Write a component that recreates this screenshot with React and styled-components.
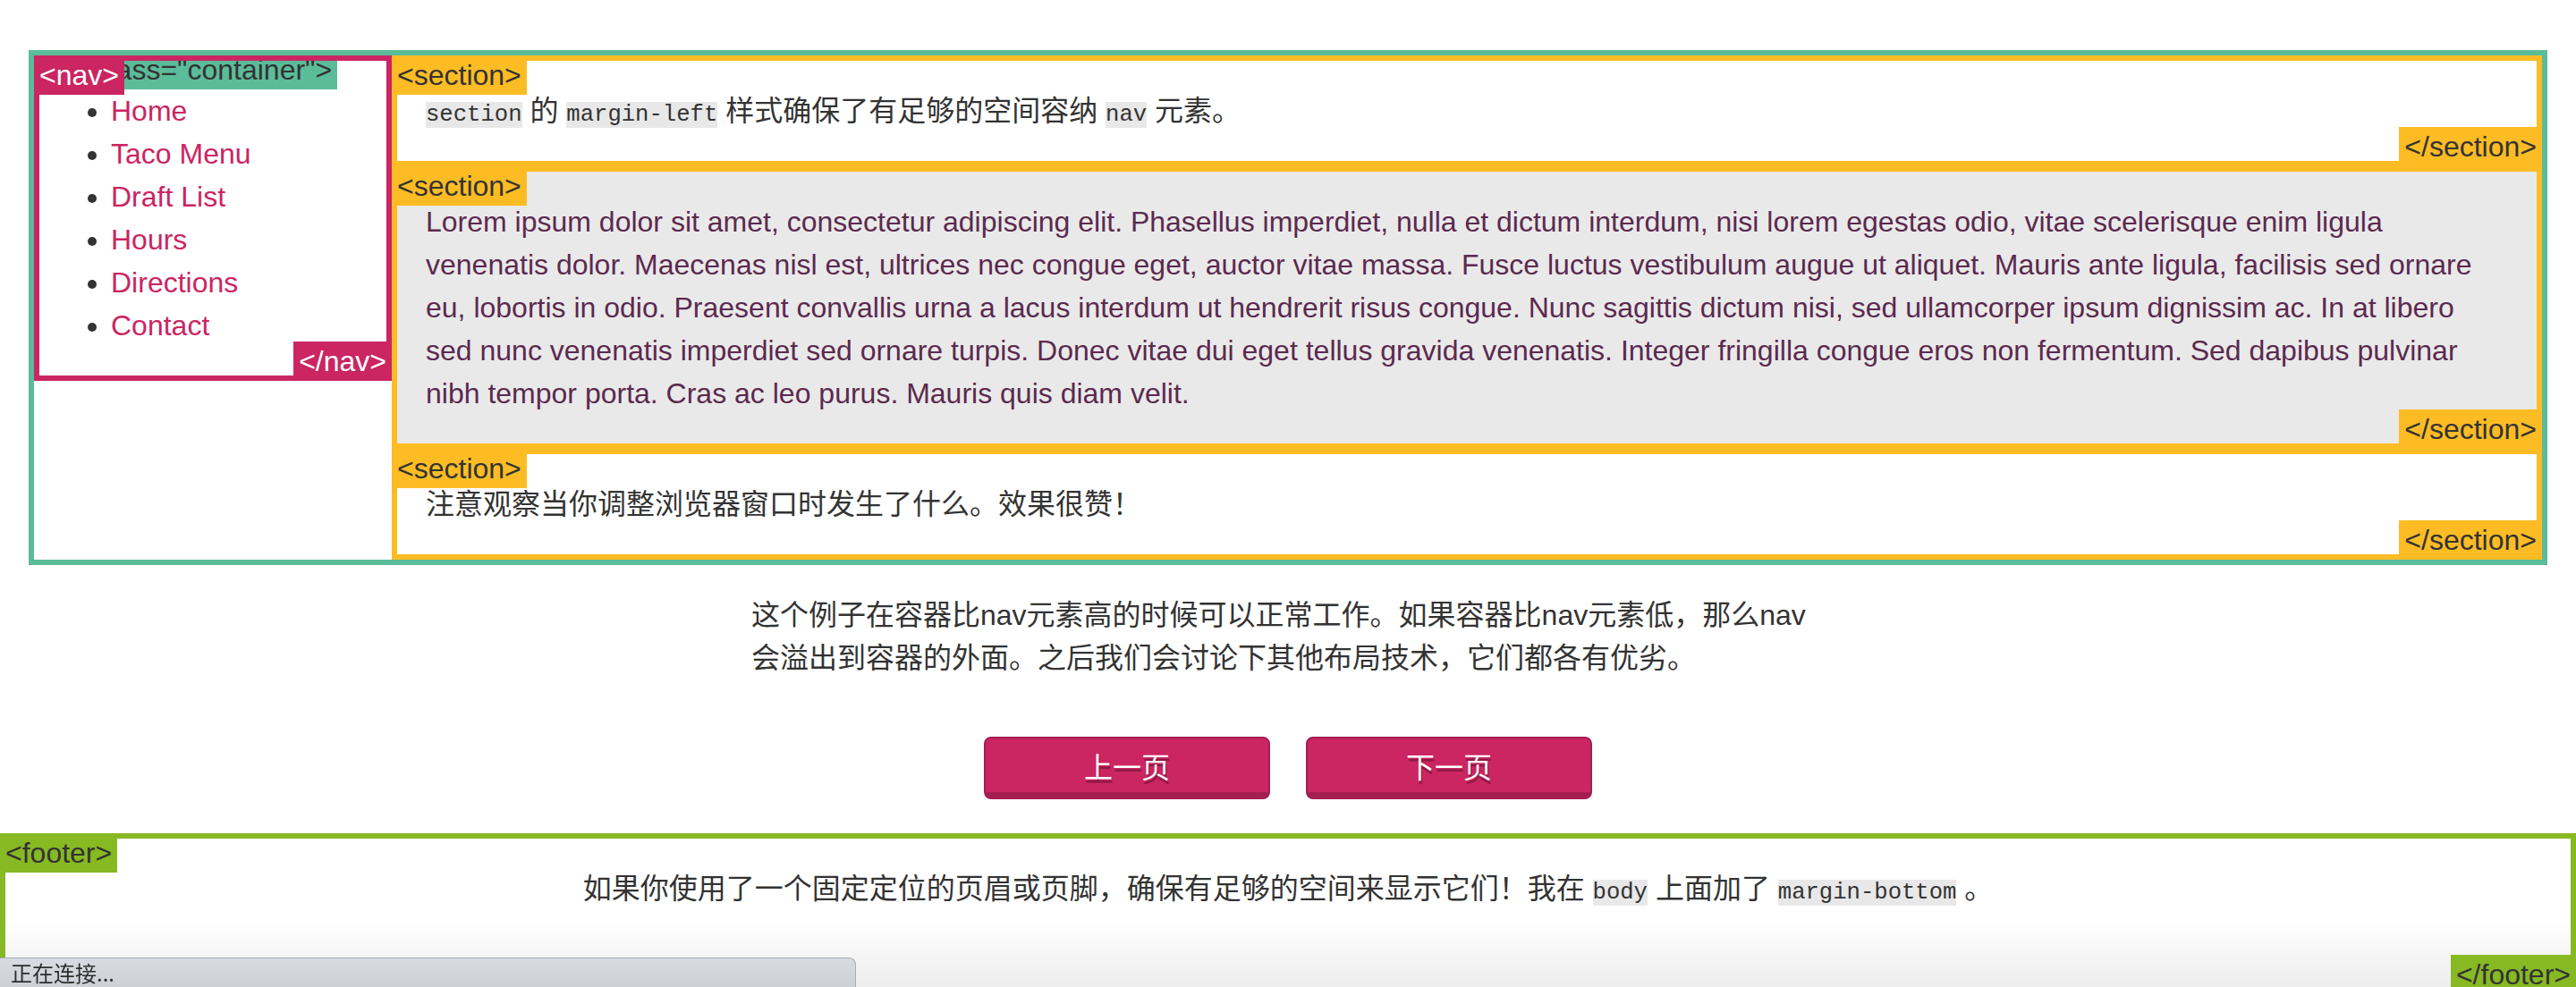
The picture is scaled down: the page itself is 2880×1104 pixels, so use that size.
import styled, { createGlobalStyle } from "styled-components";

const TEAL = "#5bbc9a";
const CRIMSON = "#cb2562";
const YELLOW = "#fdbc24";
const GREEN = "#87b923";

const GlobalStyle = createGlobalStyle`
  html, body {
    margin: 0;
    padding: 0;
    background: #ffffff;
    overflow: hidden;
  }
  body {
    font-family: "Liberation Sans", "Noto Sans CJK SC", sans-serif;
    font-size: 32px;
    line-height: 48px;
    color: #333333;
  }
  * {
    box-sizing: border-box;
  }
`;

const Page = styled.div`
  padding: 56px 32px 0;
`;

// the little "<tag>" badges that sit on each outlined box
const Tag = styled.span`
  position: absolute;
  ${(p) => (p.$end ? "right: -6px; bottom: -6px;" : "left: -6px; top: -6px;")}
  height: 44px;
  padding: 0 6px;
  font-size: 32px;
  line-height: 44px;
  white-space: nowrap;
  background: ${(p) => p.$bg};
  color: ${(p) => p.$fg || "#333333"};
`;

const Container = styled.div`
  position: relative;
  border: 6px solid ${TEAL};
  background: #ffffff;
`;

const Columns = styled.div`
  display: grid;
  grid-template-columns: 400px 1fr;
  align-items: start;
`;

const Nav = styled.nav`
  position: relative;
  border: 6px solid ${CRIMSON};
`;

const Menu = styled.ul`
  margin: 32px 0;
  padding-left: 80px;
  list-style: disc;

  a {
    color: ${CRIMSON};
    text-decoration: none;
  }
`;

const Sections = styled.div`
  display: flex;
  flex-direction: column;
`;

const Section = styled.section`
  position: relative;
  border: 6px solid ${YELLOW};
  padding: 0 32px;
  background: ${(p) => (p.$shaded ? "#e9e9e9" : "#ffffff")};
  color: ${(p) => (p.$shaded ? "#5b2a4f" : "#333333")};

  p {
    margin: 32px 0;
  }
`;

const Code = styled.code`
  font-family: "Liberation Mono", monospace;
  font-size: 25.6px;
  line-height: 1;
  background: #e8e8e8;
  color: #333333;
`;

const Note = styled.p`
  width: 1200px;
  margin: 32px auto;
`;

const Pager = styled.div`
  display: flex;
  justify-content: center;
  gap: 40px;
  margin: 64px 0 38px;
`;

const PageButton = styled.a`
  display: flex;
  align-items: center;
  justify-content: center;
  width: 320px;
  height: 70px;
  border: 2px solid #a51e50;
  border-bottom-width: 8px;
  border-radius: 8px;
  background: ${CRIMSON};
  color: #ffffff;
  text-decoration: none;
  font-family: "Noto Sans CJK SC", sans-serif;
  font-size: 32px;
  text-shadow: 1px 4px 0 #8f1a44;
`;

const Footer = styled.footer`
  position: relative;
  height: 180px;
  border: 6px solid ${GREEN};
  background: linear-gradient(to bottom, #ffffff 0, #ffffff 92px, #ececec 170px);
  text-align: center;

  p {
    margin: 32px 0;
  }
`;

const StatusBar = styled.div`
  position: fixed;
  left: 0;
  bottom: 0;
  width: 957px;
  height: 33px;
  padding-left: 12px;
  border-top: 1px solid #a9abb0;
  border-right: 1px solid #a9abb0;
  border-top-right-radius: 8px;
  background: linear-gradient(to bottom, #d8dbe1, #cdd0d7);
  font-family: "Noto Sans CJK SC", sans-serif;
  font-size: 24px;
  line-height: 32px;
  color: #2d2d2d;
`;

const links = ["Home", "Taco Menu", "Draft List", "Hours", "Directions", "Contact"];

export default function App() {
  return (
    <>
      <GlobalStyle />
      <Page>
        <Container>
          <Tag $bg={TEAL}>{'<div class="container">'}</Tag>
          <Columns>
            <Nav>
              <Tag $bg={CRIMSON} $fg="#ffffff">{"<nav>"}</Tag>
              <Menu>
                {links.map((l) => (
                  <li key={l}>
                    <a href="#">{l}</a>
                  </li>
                ))}
              </Menu>
              <Tag $end $bg={CRIMSON} $fg="#ffffff">{"</nav>"}</Tag>
            </Nav>

            <Sections>
              <Section>
                <Tag $bg={YELLOW}>{"<section>"}</Tag>
                <p>
                  <Code>section</Code> 的 <Code>margin-left</Code> 样式确保了有足够的空间容纳 <Code>nav</Code> 元素。
                </p>
                <Tag $end $bg={YELLOW}>{"</section>"}</Tag>
              </Section>

              <Section $shaded>
                <Tag $bg={YELLOW}>{"<section>"}</Tag>
                <p>
                  Lorem ipsum dolor sit amet, consectetur adipiscing elit. Phasellus imperdiet, nulla et dictum interdum, nisi lorem egestas odio, vitae scelerisque enim ligula venenatis dolor. Maecenas nisl est, ultrices nec congue eget, auctor vitae massa. Fusce luctus vestibulum augue ut aliquet. Mauris ante ligula, facilisis sed ornare eu, lobortis in odio. Praesent convallis urna a lacus interdum ut hendrerit risus congue. Nunc sagittis dictum nisi, sed ullamcorper ipsum dignissim ac. In at libero sed nunc venenatis imperdiet sed ornare turpis. Donec vitae dui eget tellus gravida venenatis. Integer fringilla congue eros non fermentum. Sed dapibus pulvinar nibh tempor porta. Cras ac leo purus. Mauris quis diam velit.
                </p>
                <Tag $end $bg={YELLOW}>{"</section>"}</Tag>
              </Section>

              <Section>
                <Tag $bg={YELLOW}>{"<section>"}</Tag>
                <p>注意观察当你调整浏览器窗口时发生了什么。效果很赞！</p>
                <Tag $end $bg={YELLOW}>{"</section>"}</Tag>
              </Section>
            </Sections>
          </Columns>
        </Container>

        <Note>
          这个例子在容器比nav元素高的时候可以正常工作。如果容器比nav元素低，那么nav会溢出到容器的外面。之后我们会讨论下其他布局技术，它们都各有优劣。
        </Note>

        <Pager>
          <PageButton href="#">上一页</PageButton>
          <PageButton href="#">下一页</PageButton>
        </Pager>
      </Page>

      <Footer>
        <Tag $bg={GREEN}>{"<footer>"}</Tag>
        <p>
          如果你使用了一个固定定位的页眉或页脚，确保有足够的空间来显示它们！我在 <Code>body</Code> 上面加了 <Code>margin-bottom</Code> 。
        </p>
        <Tag $end $bg={GREEN}>{"</footer>"}</Tag>
      </Footer>

      <StatusBar>正在连接...</StatusBar>
    </>
  );
}
